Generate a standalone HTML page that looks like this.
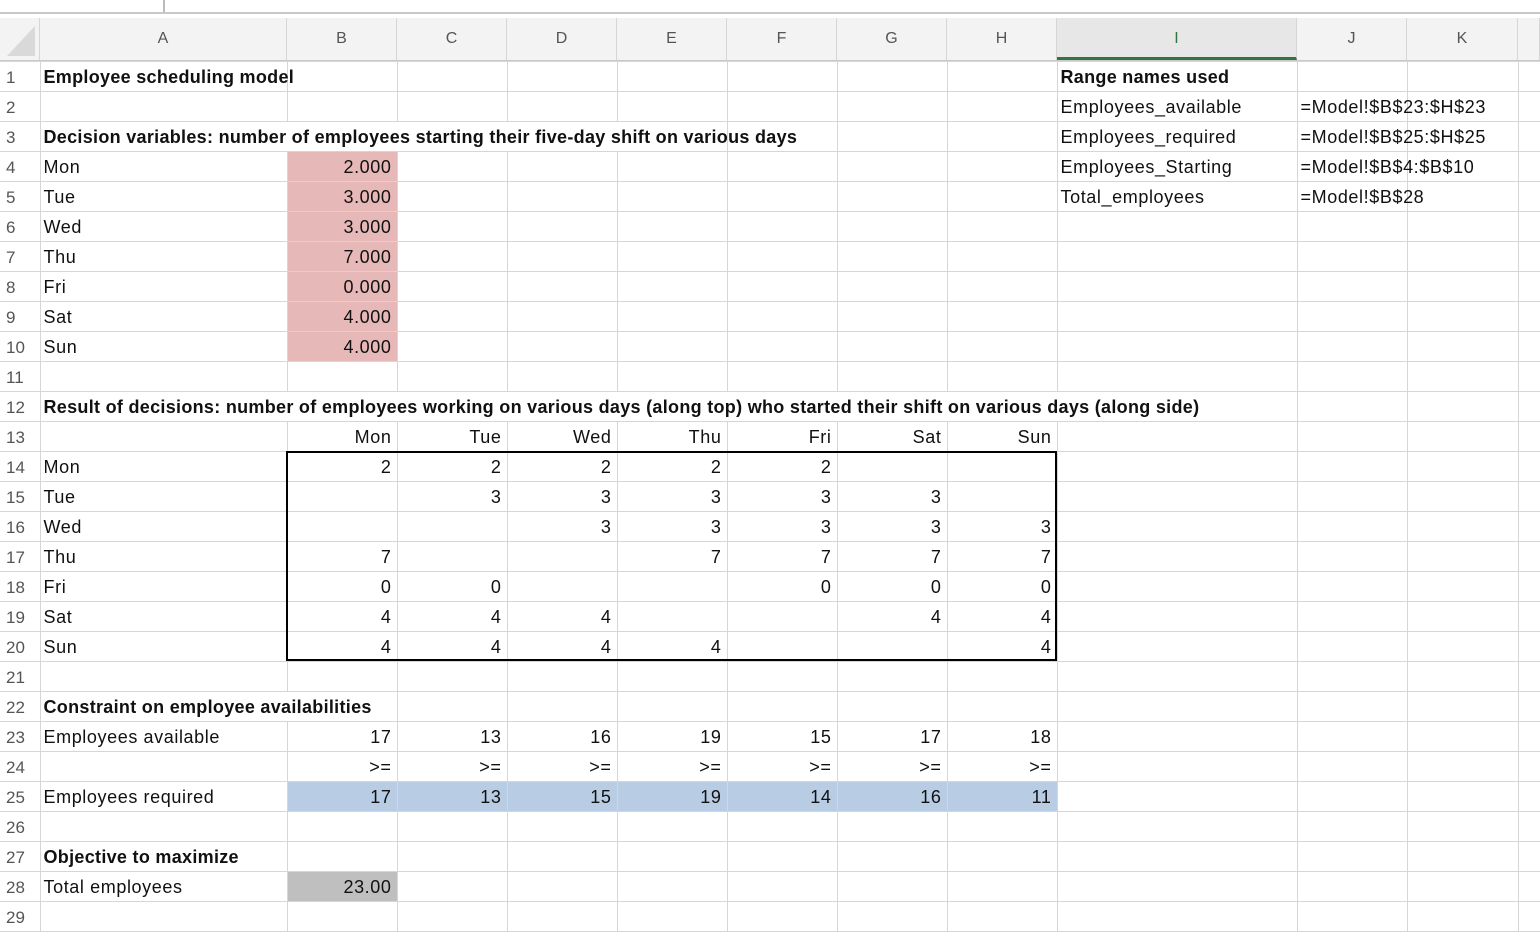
<!DOCTYPE html>
<html><head><style>
body{margin:0;width:1540px;height:932px;overflow:hidden;background:#fff;font-family:"Liberation Sans",sans-serif;}
#top{position:absolute;left:0;top:0;width:1540px;height:12px;background:#fff;border-bottom:2px solid #c8c8c8;}
#top .s{position:absolute;left:163px;top:0;width:2px;height:12px;background:#bbb}
#hdr{position:absolute;left:0;top:18px;height:42px;width:1540px;background:#f3f3f3;border-bottom:1px solid #c9c9c9;}
#hdr div{position:absolute;top:0;height:42px;line-height:42px;text-align:center;font-size:16px;color:#555;border-right:1px solid #d6d6d6;box-sizing:border-box}
table{position:absolute;left:0;top:61px;width:1540px;border-collapse:collapse;table-layout:fixed;font-size:18px;letter-spacing:0.6px;}
td{height:27px;padding:2px 5px 0 3px;border:1px solid #d6d6d6;white-space:nowrap;overflow:visible;color:#111;}
td.r{text-align:right}
td.h{color:#555;padding-left:6px;background:#fff;border-left:none;letter-spacing:0;font-size:17px}
b{font-weight:bold;letter-spacing:0.3px}
.p{background:#e6b9b8}
.bl{background:#b8cce4}
.g{background:#bfbfbf}
.bx{position:absolute;left:286px;top:451px;width:767px;height:206px;border:2px solid #000;pointer-events:none}
</style></head><body>
<div id="top"><div class="s"></div></div>
<div id="hdr">
<div style="left:0;width:40px;background:#f3f3f3"><svg width="38" height="42"><polygon points="34,8 34,38 6,38" fill="#d9d9d9"/></svg></div>
<div style="left:40px;width:247px">A</div>
<div style="left:287px;width:110px">B</div>
<div style="left:397px;width:110px">C</div>
<div style="left:507px;width:110px">D</div>
<div style="left:617px;width:110px">E</div>
<div style="left:727px;width:110px">F</div>
<div style="left:837px;width:110px">G</div>
<div style="left:947px;width:110px">H</div>
<div style="left:1057px;width:240px;color:#2e7540;background:#e7e7e7;border-bottom:3px solid #2e7540">I</div>
<div style="left:1297px;width:110px">J</div>
<div style="left:1407px;width:111px">K</div>
<div style="left:1518px;width:22px"></div>
</div>
<table>
<colgroup><col style="width:40px"><col style="width:247px"><col style="width:110px"><col style="width:110px"><col style="width:110px"><col style="width:110px"><col style="width:110px"><col style="width:110px"><col style="width:110px"><col style="width:240px"><col style="width:110px"><col style="width:111px"><col style="width:22px"></colgroup>
<tr><td class="h">1</td><td><b>Employee scheduling model</b></td><td></td><td></td><td></td><td></td><td></td><td></td><td></td><td><b>Range names used</b></td><td></td><td></td><td></td></tr>
<tr><td class="h">2</td><td></td><td></td><td></td><td></td><td></td><td></td><td></td><td></td><td>Employees_available</td><td>=Model!$B$23:$H$23</td><td></td><td></td></tr>
<tr><td class="h">3</td><td colspan="5"><b>Decision variables: number of employees starting their five-day shift on various days</b></td><td></td><td></td><td></td><td>Employees_required</td><td>=Model!$B$25:$H$25</td><td></td><td></td></tr>
<tr><td class="h">4</td><td>Mon</td><td class="r p">2.000</td><td></td><td></td><td></td><td></td><td></td><td></td><td>Employees_Starting</td><td>=Model!$B$4:$B$10</td><td></td><td></td></tr>
<tr><td class="h">5</td><td>Tue</td><td class="r p">3.000</td><td></td><td></td><td></td><td></td><td></td><td></td><td>Total_employees</td><td>=Model!$B$28</td><td></td><td></td></tr>
<tr><td class="h">6</td><td>Wed</td><td class="r p">3.000</td><td></td><td></td><td></td><td></td><td></td><td></td><td></td><td></td><td></td><td></td></tr>
<tr><td class="h">7</td><td>Thu</td><td class="r p">7.000</td><td></td><td></td><td></td><td></td><td></td><td></td><td></td><td></td><td></td><td></td></tr>
<tr><td class="h">8</td><td>Fri</td><td class="r p">0.000</td><td></td><td></td><td></td><td></td><td></td><td></td><td></td><td></td><td></td><td></td></tr>
<tr><td class="h">9</td><td>Sat</td><td class="r p">4.000</td><td></td><td></td><td></td><td></td><td></td><td></td><td></td><td></td><td></td><td></td></tr>
<tr><td class="h">10</td><td>Sun</td><td class="r p">4.000</td><td></td><td></td><td></td><td></td><td></td><td></td><td></td><td></td><td></td><td></td></tr>
<tr><td class="h">11</td><td></td><td></td><td></td><td></td><td></td><td></td><td></td><td></td><td></td><td></td><td></td><td></td></tr>
<tr><td class="h">12</td><td colspan="9"><b>Result of decisions: number of employees working on various days (along top) who started their shift on various days (along side)</b></td><td></td><td></td><td></td></tr>
<tr><td class="h">13</td><td></td><td class="r">Mon</td><td class="r">Tue</td><td class="r">Wed</td><td class="r">Thu</td><td class="r">Fri</td><td class="r">Sat</td><td class="r">Sun</td><td></td><td></td><td></td><td></td></tr>
<tr><td class="h">14</td><td>Mon</td><td class="r">2</td><td class="r">2</td><td class="r">2</td><td class="r">2</td><td class="r">2</td><td></td><td></td><td></td><td></td><td></td><td></td></tr>
<tr><td class="h">15</td><td>Tue</td><td></td><td class="r">3</td><td class="r">3</td><td class="r">3</td><td class="r">3</td><td class="r">3</td><td></td><td></td><td></td><td></td><td></td></tr>
<tr><td class="h">16</td><td>Wed</td><td></td><td></td><td class="r">3</td><td class="r">3</td><td class="r">3</td><td class="r">3</td><td class="r">3</td><td></td><td></td><td></td><td></td></tr>
<tr><td class="h">17</td><td>Thu</td><td class="r">7</td><td></td><td></td><td class="r">7</td><td class="r">7</td><td class="r">7</td><td class="r">7</td><td></td><td></td><td></td><td></td></tr>
<tr><td class="h">18</td><td>Fri</td><td class="r">0</td><td class="r">0</td><td></td><td></td><td class="r">0</td><td class="r">0</td><td class="r">0</td><td></td><td></td><td></td><td></td></tr>
<tr><td class="h">19</td><td>Sat</td><td class="r">4</td><td class="r">4</td><td class="r">4</td><td></td><td></td><td class="r">4</td><td class="r">4</td><td></td><td></td><td></td><td></td></tr>
<tr><td class="h">20</td><td>Sun</td><td class="r">4</td><td class="r">4</td><td class="r">4</td><td class="r">4</td><td></td><td></td><td class="r">4</td><td></td><td></td><td></td><td></td></tr>
<tr><td class="h">21</td><td></td><td></td><td></td><td></td><td></td><td></td><td></td><td></td><td></td><td></td><td></td><td></td></tr>
<tr><td class="h">22</td><td colspan="2"><b>Constraint on employee availabilities</b></td><td></td><td></td><td></td><td></td><td></td><td></td><td></td><td></td><td></td><td></td></tr>
<tr><td class="h">23</td><td>Employees available</td><td class="r">17</td><td class="r">13</td><td class="r">16</td><td class="r">19</td><td class="r">15</td><td class="r">17</td><td class="r">18</td><td></td><td></td><td></td><td></td></tr>
<tr><td class="h">24</td><td></td><td class="r">&gt;=</td><td class="r">&gt;=</td><td class="r">&gt;=</td><td class="r">&gt;=</td><td class="r">&gt;=</td><td class="r">&gt;=</td><td class="r">&gt;=</td><td></td><td></td><td></td><td></td></tr>
<tr><td class="h">25</td><td>Employees required</td><td class="r bl">17</td><td class="r bl">13</td><td class="r bl">15</td><td class="r bl">19</td><td class="r bl">14</td><td class="r bl">16</td><td class="r bl">11</td><td></td><td></td><td></td><td></td></tr>
<tr><td class="h">26</td><td></td><td></td><td></td><td></td><td></td><td></td><td></td><td></td><td></td><td></td><td></td><td></td></tr>
<tr><td class="h">27</td><td><b>Objective to maximize</b></td><td></td><td></td><td></td><td></td><td></td><td></td><td></td><td></td><td></td><td></td><td></td></tr>
<tr><td class="h">28</td><td>Total employees</td><td class="r g">23.00</td><td></td><td></td><td></td><td></td><td></td><td></td><td></td><td></td><td></td><td></td></tr>
<tr><td class="h">29</td><td></td><td></td><td></td><td></td><td></td><td></td><td></td><td></td><td></td><td></td><td></td><td></td></tr>
</table>
<div class="bx"></div>
</body></html>
